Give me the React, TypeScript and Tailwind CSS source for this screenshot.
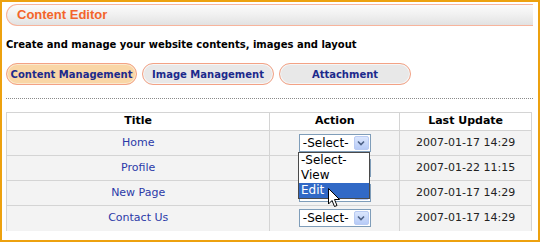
import React from 'react';

const rows = [
  { title: 'Home', date: '2007-01-17 14:29' },
  { title: 'Profile', date: '2007-01-22 11:15' },
  { title: 'New Page', date: '2007-01-17 14:29' },
  { title: 'Contact Us', date: '2007-01-17 14:29' },
];

const SelectBox: React.FC = () => (
  <div className="mx-auto flex h-[18px] w-[72px] items-center border border-[#7f9db9] bg-white">
    <span className="flex-1 pl-[3px] text-[12px] leading-none text-black">-Select-</span>
    <span className="m-px flex h-[14px] w-[15px] items-center justify-center rounded-[2px] border border-[#b9cbf3] bg-gradient-to-b from-[#dbe6fd] to-[#b7cbf7]">
      <svg width="8" height="6" viewBox="0 0 8 6">
        <path d="M1 1.5 L4 4.5 L7 1.5" fill="none" stroke="#4d6185" strokeWidth="1.6" />
      </svg>
    </span>
  </div>
);

const App: React.FC = () => {
  return (
    <div
      className="relative h-[242px] w-[540px] overflow-hidden border-2 border-[#eda10f] bg-white pl-[4px] pt-[2px]"
      style={{ fontFamily: '"DejaVu Sans", Verdana, sans-serif' }}
    >
      {/* Header bar */}
      <div className="flex h-[22px] w-[527px] items-center rounded-l-full border border-r-0 border-[#f7b49c] bg-gradient-to-b from-[#fbfbfb] via-[#f0f0f0] to-[#e2e2e2] pl-[10px]">
        <span className="text-[13px] font-bold text-[#f3652b]" style={{ fontFamily: '"Liberation Sans", Arial, sans-serif' }}>
          Content Editor
        </span>
      </div>

      <p className="mt-[12px] text-[10px] font-bold leading-[14px] text-black">
        Create and manage your website contents, images and layout
      </p>

      {/* Tabs */}
      <div className="mt-[11px] flex gap-[5px]">
        <div className="flex h-[22px] w-[131px] items-center justify-center rounded-full border border-[#f3a285] bg-[#f9d6a6] shadow-[inset_0_0_0_1px_#fbe8cc] text-[10px] font-bold text-[#1c2a8c]">
          Content Management
        </div>
        <div className="flex h-[22px] w-[132px] items-center justify-center rounded-full border border-[#f3a285] bg-[#e8e8e8] shadow-[inset_0_0_0_1px_#f6f6f6] text-[10px] font-bold text-[#1c2a8c]">
          Image Management
        </div>
        <div className="flex h-[22px] w-[132px] items-center justify-center rounded-full border border-[#f3a285] bg-[#e8e8e8] shadow-[inset_0_0_0_1px_#f6f6f6] text-[10px] font-bold text-[#1c2a8c]">
          Attachment
        </div>
      </div>

      <div className="mt-[13px] w-[527px] border-t border-dotted border-[#8a8a8a]" />

      {/* Table */}
      <table className="mt-[13px] w-[526px] border-collapse text-[11px]">
        <thead>
          <tr className="h-[18px] bg-white">
            <th className="w-[264px] border border-[#d4d4d4] font-bold text-black">Title</th>
            <th className="w-[130px] border border-[#d4d4d4] font-bold text-black">Action</th>
            <th className="w-[132px] border border-[#d4d4d4] font-bold text-black">Last Update</th>
          </tr>
        </thead>
        <tbody>
          {rows.map((r, i) => (
            <tr key={r.title} className="h-[25px] bg-[#f3f3f3]">
              <td className={`border border-[#d4d4d4] text-center text-[#2b3aa8] ${i === 3 ? 'border-b-0' : ''}`}>{r.title}</td>
              <td className={`border border-[#d4d4d4] ${i === 3 ? 'border-b-0' : ''}`}>
                <SelectBox />
              </td>
              <td className={`border border-[#d4d4d4] text-center text-[#222] ${i === 3 ? 'border-b-0' : ''}`}>{r.date}</td>
            </tr>
          ))}
        </tbody>
      </table>

      {/* Open dropdown list */}
      <div className="absolute left-[296px] top-[150px] w-[72px] border border-[#4a4a4a] bg-white text-[12px] leading-[15px] text-black">
        <div className="pl-[2px]">-Select-</div>
        <div className="pl-[2px]">View</div>
        <div className="bg-[#3169c6] pl-[2px] text-white">Edit</div>
      </div>

      {/* Mouse cursor */}
      <svg className="absolute left-[326px] top-[186px]" width="13" height="20" viewBox="0 0 13 20">
        <path
          d="M0.5 0.5 L0.5 16 L4 12.5 L6.5 18.5 L9 17.5 L6.5 11.5 L11.5 11.5 Z"
          fill="#fff"
          stroke="#000"
          strokeWidth="1"
          strokeLinejoin="miter"
        />
      </svg>
    </div>
  );
};

export default App;
